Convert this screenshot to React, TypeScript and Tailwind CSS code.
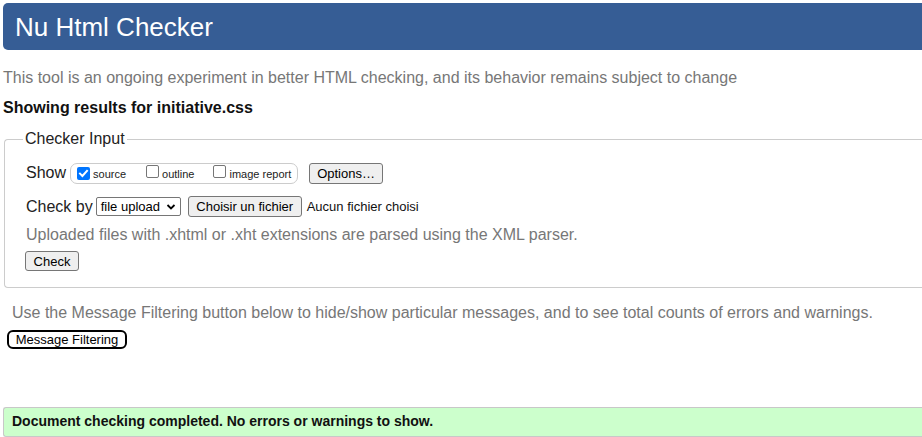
import React from "react";

function Checkbox({ checked }: { checked?: boolean }) {
  if (checked) {
    return (
      <span className="inline-flex h-[13px] w-[13px] items-center justify-center rounded-[2px] bg-[#0075ff]">
        <svg width="11" height="11" viewBox="0 0 11 11">
          <path d="M2 5.6 L4.4 8 L9 2.8" fill="none" stroke="#fff" strokeWidth="2" strokeLinecap="square" />
        </svg>
      </span>
    );
  }
  return <span className="inline-block h-[13px] w-[13px] rounded-[2px] border border-[#767676] bg-white" />;
}

function NativeButton({ children, className = "" }: { children: React.ReactNode; className?: string }) {
  return (
    <button
      type="button"
      className={
        "rounded-[3px] border border-[#767676] bg-[#efefef] px-[7px] text-[13px] leading-[15px] text-black " + className
      }
    >
      {children}
    </button>
  );
}

export default function App() {
  return (
    <div
      className="w-[922px] h-[437px] overflow-hidden bg-white text-black"
      style={{ fontFamily: '"Liberation Sans", Arial, sans-serif' }}
    >
      <div className="ml-[3px] w-[930px] pt-[3px]">
        <h1 className="flex h-[47px] items-center rounded-l-[5px] bg-[#365d95] pl-[12px] text-[26px] leading-none font-normal text-white">
          Nu Html Checker
        </h1>

        <p className="mt-[19px] text-[16px] leading-[18px] text-[#777]">
          This tool is an ongoing experiment in better HTML checking, and its behavior remains subject to change
        </p>
        <p className="mt-[12px] text-[16px] leading-[18px] font-bold text-[#111]">Showing results for initiative.css</p>

        <fieldset className="mt-[13px] ml-[1px] rounded-l-[4px] border border-r-0 border-[#cccccc] pl-[21px] pb-[14px]">
          <legend className="ml-[-3px] px-[2px] text-[16px] leading-[18px] text-[#222]">Checker Input</legend>

          <div className="mt-[13px] flex h-[24px] items-center">
            <span className="text-[16px] text-[#222]">Show</span>
            <div className="ml-[4px] flex h-[21px] w-[228px] items-center rounded-[7px] border border-[#cccccc] pl-[6px]">
              <Checkbox checked />
              <span className="ml-[3px] mt-[2px] text-[11px] text-[#222]">source</span>
              <span className="ml-[20px]">
                <Checkbox />
              </span>
              <span className="ml-[3px] mt-[2px] text-[11px] text-[#222]">outline</span>
              <span className="ml-[19px]">
                <Checkbox />
              </span>
              <span className="ml-[3px] mt-[2px] text-[11px] text-[#222]">image report</span>
            </div>
            <NativeButton className="ml-[11px] h-[21px] w-[74px]">Options…</NativeButton>
          </div>

          <div className="mt-[10px] flex h-[23px] items-center">
            <span className="text-[16px] text-[#222]">Check by</span>
            <div className="ml-[3px] flex h-[19px] w-[85px] items-center justify-between rounded-[2px] border border-[#767676] bg-white pl-[4px] pr-[4px] text-[13px]">
              <span>file upload</span>
              <svg width="10" height="10" viewBox="0 0 10 10">
                <path d="M1.5 3 L5 6.5 L8.5 3" fill="none" stroke="#000" strokeWidth="1.8" />
              </svg>
            </div>
            <NativeButton className="ml-[7px] h-[21px] w-[114px]">Choisir un fichier</NativeButton>
            <span className="ml-[5px] text-[13px] text-[#111]">Aucun fichier choisi</span>
          </div>

          <p className="mt-[8px] text-[16px] leading-[18px] text-[#777]">
            Uploaded files with .xhtml or .xht extensions are parsed using the XML parser.
          </p>

          <NativeButton className="mt-[7px] ml-[-1px] h-[20px] w-[54px]">Check</NativeButton>
        </fieldset>

        <p className="mt-[16px] pl-[9px] text-[16px] leading-[18px] text-[#777]">
          Use the Message Filtering button below to hide/show particular messages, and to see total counts of errors and warnings.
        </p>
        <button
          type="button"
          className="mt-[8px] ml-[4px] h-[19px] w-[120px] rounded-[6px] border-2 border-black bg-white text-[13px] leading-[13px] text-black"
        >
          Message Filtering
        </button>

        <div className="mt-[56px] flex h-[30px] items-center rounded-l-[3px] border border-r-0 border-[#c8c8c8] bg-[#ccffcc] pl-[8px] text-[14px] font-bold text-[#111]">
          Document checking completed. No errors or warnings to show.
        </div>
      </div>
    </div>
  );
}
